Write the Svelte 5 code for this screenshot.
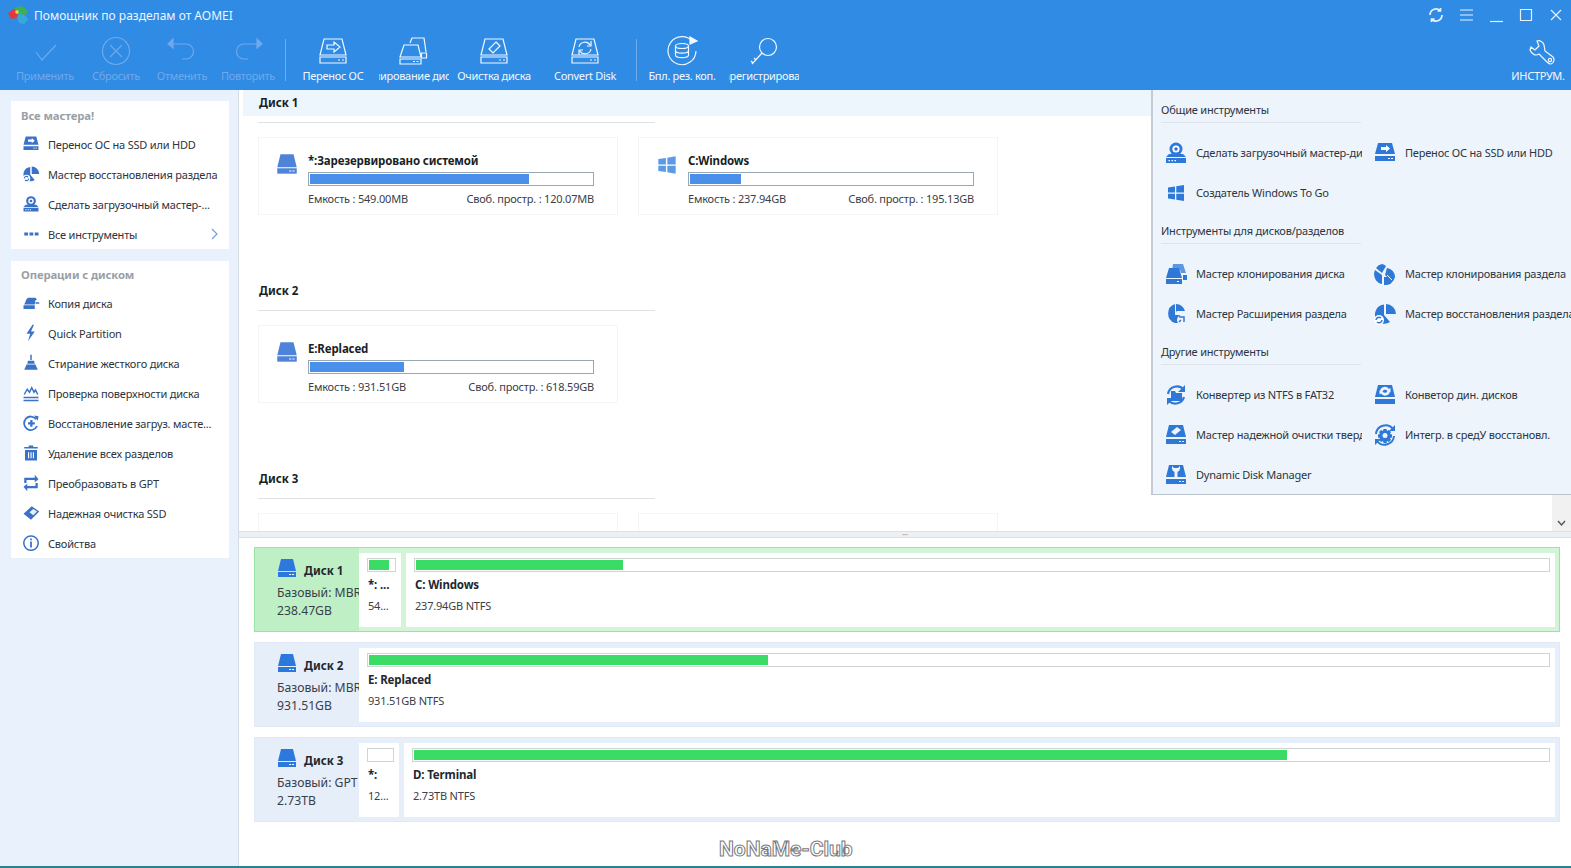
<script>
  const ic = {
    migrate: '<path d="M5 2h14l3 11H2z"/><path d="M2 15h20v5H2z"/><path fill="#fff" d="M8 6h5V4l4 3.500-4 3.500V9H8z"/><path fill="#fff" d="M15 17h2v1h-2zM18 17h2v1h-2z"/>',
    restore: '<path d="M13 2a10 10 0 0 1 10 10H13z"/><path d="M11 2.500V13l6 7a10 10 0 0 1-14-3 10 10 0 0 1 8-14.500z"/><circle cx="6" cy="18" r="5" fill="#fff"/><path fill="none" stroke="currentColor" stroke-width="1.500" d="M3 18a3 3 0 0 1 5-2M9 18a3 3 0 0 1-5 2"/>',
    boot: '<circle cx="12" cy="8" r="6.500"/><circle cx="12" cy="8" r="3.600" fill="#fff"/><circle cx="12" cy="8" r="1.800"/><path d="M5 13h14l3 3H2z"/><path d="M2 17h20v5H2z"/><path fill="#fff" d="M4.500 19h1.500v1.300H4.500zM7.500 19H9v1.300H7.500zM10.500 19H12v1.300h-1.500z"/>',
    dots: '<path d="M3 10h5v4H3zM10 10h5v4h-5zM17 10h5v4h-5z"/>',
    copy: '<path d="M8 5h10l2 3H18l-1 6H3l3-7z"/><path d="M2 15h15v5H2z"/><path d="M18 11h5v2h-5z"/>',
    bolt: '<path d="M14 1 6 13h5l-3 10 9-13h-5l4-9z"/>',
    broom: '<path d="M11 1h2v7h-2z"/><path d="M8 9h8l1 4H7z"/><path d="M6 14h12l3 7H3z"/>',
    surface: '<path d="M2 21h20v2H2zM2 17h20v2H2z"/><path fill="none" stroke="currentColor" stroke-width="2" d="M3 14 7 7l3 4 3-6 3 6 2-3 3 6"/>',
    recover: '<path fill="none" stroke="currentColor" stroke-width="2.400" d="M19 7a9 9 0 1 0 1 9"/><path d="M16 2l6 1-1 6z"/><path d="M11 8h3v3h3v3h-3v3h-3v-3H8v-3h3z"/>',
    trash: '<path d="M9 2h6v2h6v2H3V4h6z"/><path d="M4 8h16v14H4z"/><path fill="#fff" d="M8 11h1.500v8H8zM11.300 11h1.500v8h-1.500zM14.500 11H16v8h-1.500z"/>',
    convert: '<path d="M3 5h14V1l5 6-5 4V8H6v4H3zM21 19H7v4l-5-6 5-4v3h11v-4h3z"/>',
    eraser: '<path d="M13 3 23 10 12 21 2 13z"/><path fill="#fff" d="M15 6.500 20 10l-5 5-5-4z" opacity=".9"/>',
    info: '<path fill="none" stroke="currentColor" stroke-width="2" d="M12 2.500a9.500 9.500 0 1 0 .01 0z"/><path d="M10.800 6h2.400v2.400h-2.400zM10.800 10h2.400v8h-2.400z"/>',
    win: '<path d="M4 6.500 11 5.500V11.500H4zM12.300 5.300 20 4V11.500H12.300zM4 12.800h7V18.500L4 17.500zM12.300 12.800H20V20L12.300 18.700z"/>',
    disk: '<path d="M6 2h12l3 12H3z"/><path d="M3 15h18v5H3z"/><path fill="#fff" d="M14 17h2v1h-2zM17 17h2v1h-2z"/>',
    clone: '<path d="M9 2h10l3 9h-5l-1-3H8z" opacity=".75"/><path d="M5 6h10l3 10H2z"/><path d="M2 17h16v5H2z"/><path d="M19 13h4v5h-4z"/><path fill="#fff" d="M13 19h2v1h-2z"/>',
    pclone: '<path d="M9 2a9 9 0 0 1 4 2l-4 7L3 6a9 9 0 0 1 6-4z"/><path d="M2 8l7 5v9a10 10 0 0 1-7-14z"/><path d="M14 6a9 9 0 0 1 8 9h-8l-2-2z"/><path d="M11 15h11a10 10 0 0 1-11 8z"/><path fill="none" stroke="#edf4fc" d="M14 13l5 5"/>',
    extend: '<path d="M12 2a10 10 0 0 1 9 7H13a2 2 0 0 0-1 1z"/><path d="M11 2v11h7l3 3a10 10 0 0 1-10 5A10 10 0 0 1 11 2z"/><circle cx="18" cy="18" r="5" fill="#edf4fc"/><path fill="none" stroke="currentColor" stroke-width="1.500" d="M15 15h5v5M15 20l2-2"/>',
    fat: '<path fill="none" stroke="currentColor" stroke-width="2.200" d="M4 11A9 9 0 0 1 20 7M20 14A9 9 0 0 1 5 18"/><path d="M21 2v7h-7zM3 22v-7h7z"/><path d="M7 8h4l1 2h6v8H7z"/>',
    dyn: '<path d="M5 2h14l3 12H2z"/><path d="M2 16h20v5H2z"/><path fill="#edf4fc" d="M7 8a5 5 0 0 1 9-2l1.500-1v4h-4l1-1a3 3 0 0 0-5 0zM17 8.500a5 5 0 0 1-9 2L6.500 11.500v-4h4l-1 1a3 3 0 0 0 5 0z"/>',
    wipe: '<path d="M5 2h14l3 12H2z"/><path d="M2 16h20v5H2z"/><path fill="#edf4fc" d="M13 4l4 3-6 5-4-3z"/><path fill="#edf4fc" d="M15 18h2v1h-2zM18 18h2v1h-2z"/>',
    gear: '<path fill="none" stroke="currentColor" stroke-width="2" d="M3 11A9.500 9.500 0 0 1 20 6M21 13A9.500 9.500 0 0 1 4 18"/><path d="M22 2v6h-6zM2 22v-6h6z"/><path d="M10.500 6h3l.5 2 2-1 2 2-1 2 2 .500v3l-2 .500 1 2-2 2-2-1-.5 2h-3l-.5-2-2 1-2-2 1-2-2-.500v-3l2-.500-1-2 2-2 2 1z"/><circle cx="12" cy="12.500" r="2.500" fill="#edf4fc"/>',
    wrench: '<path d="M5 2h14l3 12H2z"/><path d="M2 16h20v5H2z"/><path fill="#edf4fc" d="M8 3v3a4 4 0 0 0 2.500 3V14h3V9A4 4 0 0 0 16 6V3l-2 2h-4z"/><path fill="#edf4fc" d="M15 18h2v1h-2zM18 18h2v1h-2z"/>'
  };

  const tb = {
    apply: '<path d="M9 16l6 8L29 9"/>',
    reset: '<circle cx="18" cy="15" r="13.500"/><path d="M12 9l12 12M24 9 12 21"/>',
    undo: '<path d="M6 8h16a7.500 7.500 0 0 1 0 15h-4"/><path d="M9 3 4 8l5 4z" fill="currentColor"/>',
    redo: '<path d="M30 8H14a7.500 7.500 0 0 0 0 15h4"/><path d="M27 3l5 5-5 4z" fill="currentColor"/>',
    move: '<path d="M9 3h18l4 16H5z"/><path d="M5 21h26v6H5z"/><path d="M23 24h2M27 24h2"/><path d="M12 9h7V6l6 5-6 5v-3h-7z"/>',
    clone: '<path d="M14 7 16 2h12l2 14"/><path d="M25.500 17h5v5h-5z"/><path d="M8 9h14l3 12H4z"/><path d="M4 23h21v5H4z"/><path d="M17 25.500h2M20.500 25.500h2"/>',
    wipe: '<path d="M9 3h18l4 16H5z"/><path d="M5 21h26v6H5z"/><path d="M23 24h2M27 24h2"/><path d="M20 6l4 4-7 7-4-4z"/>',
    conv: '<path d="M9 3h18l4 16H5z"/><path d="M5 21h26v6H5z"/><path d="M23 24h2M27 24h2"/><path d="M12 11a6 6 0 0 1 11-2M24 13a6 6 0 0 1-11 2M24 5v5h-4M12 19v-5h4"/>',
    backup: '<path d="M29 6A14 14 0 1 0 32 15"/><path d="M26 1l7 4-7 3z" fill="currentColor"/><ellipse cx="18" cy="10" rx="6.500" ry="2.500"/><path d="M11.500 10v9c0 3.500 13 3.500 13 0v-9M11.500 14.500c0 3.500 13 3.500 13 0"/>',
    key: '<circle cx="22" cy="11" r="8.500"/><path d="M16 17 6 28M10 24l-2-2M7 27l-2-2"/>',
    tools: '<path d="M17 5C20 4 23 6 24 9L25 15 33 21C35 23 34 27 31 28 29 28 28 27 27 26L19 18C16 20 12 19 10 14L11 11 15 14 19 10z"/><circle cx="30" cy="24" r="1.600"/>'
  };

  const tools = [
    { label: 'Применить', icon: 'apply', off: true, w: 'w70' },
    { label: 'Сбросить', icon: 'reset', off: true, w: 'w72' },
    { label: 'Отменить', icon: 'undo', off: true, w: 'w60' },
    { label: 'Повторить', icon: 'redo', off: true, w: 'w72' },
    { sep: true },
    { label: 'Перенос ОС', icon: 'move', w: 'w90' },
    { label: 'Клонирование диска', icon: 'clone', w: 'w72', shift: true },
    { label: 'Очистка диска', icon: 'wipe', w: 'w88' },
    { label: 'Convert Disk', icon: 'conv', w: 'w94' },
    { sep: true, wide: true },
    { label: 'Бпл. рез. коп.', icon: 'backup', w: 'w88' },
    { label: 'Зарегистрировать', icon: 'key', w: 'w76' }
  ];

  const wizards = [
    ['migrate', 'Перенос ОС на SSD или HDD'],
    ['restore', 'Мастер восстановления раздела'],
    ['boot', 'Сделать загрузочный мастер-...'],
    ['dots', 'Все инструменты']
  ];
  const ops = [
    ['copy', 'Копия диска'], ['bolt', 'Quick Partition'], ['broom', 'Стирание жесткого диска'],
    ['surface', 'Проверка поверхности диска'], ['recover', 'Восстановление загруз. масте...'],
    ['trash', 'Удаление всех разделов'], ['convert', 'Преобразовать в GPT'],
    ['eraser', 'Надежная очистка SSD'], ['info', 'Свойства']
  ];

  const sections = [
    { name: 'Диск 1', cards: [
      { icon: 'disk', title: '*:Зарезервировано системой', cap: '549.00MB', free: '120.07MB', pct: 77.500 },
      { icon: 'win', title: 'C:Windows', cap: '237.94GB', free: '195.13GB', pct: 18 }
    ] },
    { name: 'Диск 2', cards: [
      { icon: 'disk', title: 'E:Replaced', cap: '931.51GB', free: '618.59GB', pct: 33.500 }
    ] },
    { name: 'Диск 3', cards: [
      { icon: 'disk', title: '', cap: '', free: '', pct: 0 },
      { icon: 'disk', title: '', cap: '', free: '', pct: 0 }
    ] }
  ];

  const menu = [
    { name: 'Общие инструменты', items: [
      ['boot', 'Сделать загрузочный мастер-диск'], ['migrate', 'Перенос ОС на SSD или HDD'], ['win', 'Создатель Windows To Go']
    ] },
    { name: 'Инструменты для дисков/разделов', items: [
      ['clone', 'Мастер клонирования диска'], ['pclone', 'Мастер клонирования раздела'],
      ['extend', 'Мастер Расширения раздела'], ['restore', 'Мастер восстановления раздела']
    ] },
    { name: 'Другие инструменты', items: [
      ['fat', 'Конвертер из NTFS в FAT32'], ['dyn', 'Конветор дин. дисков'],
      ['wipe', 'Мастер надежной очистки твердого'], ['gear', 'Интегр. в средУ восстановл.'],
      ['wrench', 'Dynamic Disk Manager']
    ] }
  ];

  const disks = [
    { name: 'Диск 1', type: 'Базовый: MBR', size: '238.47GB', active: true, parts: [
      { t: '*: ...', d: '54...', w: 42, pct: 80 },
      { t: 'C: Windows', d: '237.94GB NTFS', grow: true, pct: 18.300 }
    ] },
    { name: 'Диск 2', type: 'Базовый: MBR', size: '931.51GB', parts: [
      { t: 'E: Replaced', d: '931.51GB NTFS', grow: true, pct: 33.800 }
    ] },
    { name: 'Диск 3', type: 'Базовый: GPT', size: '2.73TB', parts: [
      { t: '*:', d: '12...', w: 40, pct: 0 },
      { t: 'D: Terminal', d: '2.73TB NTFS', grow: true, pct: 77 }
    ] }
  ];
</script>

{#snippet icon(name, size)}
  <svg class="ico" width={size} height={size} viewBox="0 0 24 24" fill="currentColor">{@html ic[name]}</svg>
{/snippet}

<div class="app">
  <header class="head">
    <div class="titlebar">
      <svg class="logo" width="22" height="20" viewBox="0 0 22 20">
        <path fill="#e23a3a" d="M1 8l6-4 4 3-1 6-6 1z"/>
        <path fill="#3fae5a" d="M7 3l8-2 6 5-3 5-7-3z"/>
        <path fill="#38a7dc" d="M10 13l2-5 7 3 2 4-4 4-5-1z"/>
        <path fill="#f2d24a" d="M8 6l3-1 1 3-3 1z"/>
      </svg>
      <span class="apptitle">Помощник по разделам от AOMEI</span>
      <div class="winbtns">
        <svg class="refresh" width="16" height="16" viewBox="0 0 16 16"><path d="M2 8a6 6 0 0 1 10-4.500M14 8a6 6 0 0 1-10 4.500M12.500 1v3h-3M3.500 15v-3h3"/></svg>
        <svg width="16" height="16" viewBox="0 0 16 16"><path d="M2 3h13M2 8h13M2 13h13"/></svg>
        <svg width="16" height="16" viewBox="0 0 16 16"><path d="M2 14.500h13"/></svg>
        <svg width="16" height="16" viewBox="0 0 16 16"><path d="M2.500 2.500h11v11h-11z"/></svg>
        <svg width="16" height="16" viewBox="0 0 16 16"><path d="M3 3l10 10M13 3 3 13"/></svg>
      </div>
    </div>
    <div class="toolbar">
      {#each tools as t}
        {#if t.sep}
          <span class="tsep" class:wide={t.wide}></span>
        {:else}
          <div class="tool {t.w}" class:off={t.off}>
            <svg width="36" height="30" viewBox="0 0 36 30">{@html tb[t.icon]}</svg>
            <span class="tlabel"><span class:shift={t.shift}>{t.label}</span></span>
          </div>
        {/if}
      {/each}
      <div class="tool toolsbtn">
        <svg width="36" height="30" viewBox="0 0 36 30">{@html tb.tools}</svg>
        <span class="tlabel"><span>ИНСТРУМ.</span></span>
      </div>
    </div>
  </header>

  <div class="body">
    <aside class="side">
      <section class="panel">
        <h3>Все мастера!</h3>
        {#each wizards as [i, l], n}
          <div class="sitem">
            {@render icon(i, 18)}
            <span>{l}</span>
            {#if n === 3}
              <svg class="chev" width="8" height="12" viewBox="0 0 8 12"><path d="M1 1l5 5-5 5"/></svg>
            {/if}
          </div>
        {/each}
      </section>
      <section class="panel">
        <h3>Операции с диском</h3>
        {#each ops as [i, l]}
          <div class="sitem">
            {@render icon(i, 18)}
            <span>{l}</span>
          </div>
        {/each}
      </section>
    </aside>

    <main class="main">
      <div class="upper">
        {#each sections as s, si}
          <section class="dsec">
            <h2 class:band={si === 0}>{s.name}</h2>
            <div class="rule"></div>
            <div class="cards">
              {#each s.cards as c}
                <article class="card">
                  <span class="cicon" class:wincol={c.icon === 'win'}>{#if c.title}{@render icon(c.icon, 26)}{/if}</span>
                  {#if c.title}
                    <div class="cbody">
                      <div class="ctitle">{c.title}</div>
                      <div class="cbar"><i style="width:{c.pct}%"></i></div>
                      <div class="cinfo"><span>Емкость : {c.cap}</span><span>Своб. простр. : {c.free}</span></div>
                    </div>
                  {/if}
                </article>
              {/each}
            </div>
          </section>
        {/each}
        <div class="scroll">
          <svg width="9" height="7" viewBox="0 0 9 7"><path d="M1 1l3.500 4L8 1"/></svg>
        </div>
        <div class="menu">
          {#each menu as m}
            <section class="msec">
              <h4>{m.name}</h4>
              <div class="mgrid">
                {#each m.items as [i, l]}
                  <div class="mitem">
                    {@render icon(i, 24)}
                    <span>{l}</span>
                  </div>
                {/each}
              </div>
            </section>
          {/each}
        </div>
      </div>

      <div class="split"><span>•••</span></div>

      <div class="lower">
        {#each disks as d}
          <div class="row" class:active={d.active}>
            <div class="rinfo">
              <div class="rname">{@render icon('disk', 24)}<b>{d.name}</b></div>
              <div class="rtext">{d.type}</div>
              <div class="rtext">{d.size}</div>
            </div>
            <div class="parts">
              {#each d.parts as p}
                <div class="part" class:grow={p.grow} style={p.w ? `width:${p.w}px` : ''}>
                  <div class="pbar"><i style="width:{p.pct}%"></i></div>
                  <div class="ptitle">{p.t}</div>
                  <div class="pdet">{p.d}</div>
                </div>
              {/each}
            </div>
          </div>
        {/each}
        <div class="mark">NoNaMe-Club</div>
      </div>
    </main>
  </div>
</div>

<style>
  :global(body) { margin: 0; background: #fff; }
  :global(*) { box-sizing: border-box; }
  .app {
    width: 1571px; height: 868px; display: flex; flex-direction: column; overflow: hidden;
    font-family: "Noto Sans", "Open Sans", sans-serif; font-size: 11px; letter-spacing: -0.2px; color: #2c3440;
    border-bottom: 2px solid #2b8093;
  }
  .head { height: 90px; background: #2f8be4; color: #fff; flex: none; }
  .titlebar { height: 30px; display: flex; align-items: center; padding-left: 7px; }
  .logo { margin-right: 5px; }
  .apptitle { font-size: 12px; letter-spacing: 0; color: #eef6ff; }
  .winbtns { margin-left: auto; display: flex; gap: 14px; padding-right: 7px; }
  .winbtns svg { fill: none; stroke: #e8f2fd; stroke-width: 1.200; }
  .winbtns .refresh { stroke-width: 1.700; }
  .toolbar { height: 60px; display: flex; padding-left: 10px; }
  .tool { display: flex; flex-direction: column; align-items: center; padding-top: 6px; flex: none; color: #f2f8ff; }
  .tool svg { fill: none; stroke: currentColor; stroke-width: 1.200; }
  .tool.off { color: #6fa9ea; }
  .tlabel { width: 70px; margin-top: 2px; font-size: 11px; letter-spacing: -0.3px; line-height: 16px; display: flex; justify-content: center; overflow: hidden; white-space: nowrap; flex: none; }
  .tlabel span { flex: none; }
  .tlabel .shift { padding-right: 12px; }
  .w60 { width: 60px; } .w70 { width: 70px; } .w72 { width: 72px; } .w76 { width: 76px; }
  .w88 { width: 88px; } .w90 { width: 90px; } .w94 { width: 94px; }
  .w90 { margin-left: 1px; }
  .tsep { width: 1px; height: 42px; margin: 9px 1px 0 1px; background: #6facec; flex: none; }
  .tsep.wide { margin-left: 4px; }
  .w88 .tlabel, .w94 .tlabel { width: 88px; }
  .toolsbtn { margin-left: auto; width: 66px; }
  .body { flex: 1; display: grid; grid-template-columns: 239px 1fr; min-height: 0; }
  .side { background: #e9f2fc; border-right: 1px solid #d6dce4; padding: 11px 9px 0 11px; display: flex; flex-direction: column; gap: 12px; }
  .panel { background: #fff; }
  .panel h3 { margin: 0; height: 28px; line-height: 30px; padding-left: 10px; font-size: 11.300px; letter-spacing: -0.1px; font-weight: 700; color: #9a9fa6; }
  .panel:last-child h3 { height: 27px; line-height: 27px; }
  .sitem { height: 30px; display: flex; align-items: center; padding-left: 11px; gap: 8px; color: #2c3440; position: relative; white-space: nowrap; }
  .sitem .ico { color: #3a72c8; flex: none; }
  .chev { position: absolute; right: 10px; top: 9px; fill: none; stroke: #6f9ee0; stroke-width: 1.200; }
  .main { position: relative; min-width: 0; display: flex; flex-direction: column; }
  .upper { height: 441px; overflow: hidden; position: relative; flex: none; }
  .dsec { padding-left: 19px; height: 188px; }
  h2 { margin: 0 0 6px -15px; padding-left: 16px; height: 26px; line-height: 26px; font-size: 11.500px; letter-spacing: 0; font-weight: 700; color: #1a1f26; }
  h2.band { background: #eef6fd; }
  .rule { width: 397px; height: 1px; background: #dfe2e6; margin-bottom: 14px; }
  .cards { display: flex; gap: 20px; }
  .card { width: 360px; height: 78px; border: 1px solid #f3f4f6; display: flex; padding: 16px 23px 0 17px; background: #fff; }
  .cicon { width: 32px; flex: none; color: #4f83d8; margin: -2px 2px 0 -2px; }
  .wincol { color: #5b9be6; }
  .cbody { flex: 1; min-width: 0; }
  .ctitle { font-weight: 700; font-size: 11.500px; letter-spacing: -0.15px; line-height: 14px; color: #1a1f26; height: 18px; }
  .cbar { height: 14px; border: 1px solid #9ba6b3; padding: 1px; background: #fff; }
  .cbar i { display: block; height: 100%; background: #4a8fe9; }
  .cinfo { display: flex; justify-content: space-between; margin-top: 5px; line-height: 16px; color: #3a4048; }
  .scroll { position: absolute; right: 0; top: 405px; width: 19px; height: 36px; background: #f1f1f1; display: flex; align-items: flex-end; justify-content: center; padding-bottom: 4px; }
  .scroll svg { fill: none; stroke: #555; stroke-width: 1.400; }
  .menu { position: absolute; right: 0; top: 0; width: 420px; height: 405px; background: #edf4fc; border-left: 2px solid #c4cbd4; border-bottom: 1px solid #bcc4ce; padding: 8px 0 0 8px; }
  .msec { margin-bottom: 6px; }
  h4 { margin: 0 0 10px; height: 25px; line-height: 24px; font-size: 11px; font-weight: 400; width: 200px; border-bottom: 1px solid #dde4ec; color: #2c3440; white-space: nowrap; }
  .mgrid { display: grid; grid-template-columns: 209px 209px; grid-auto-rows: 40px; }
  .mitem { display: flex; align-items: center; padding-left: 3px; padding-bottom: 1px; gap: 8px; overflow: hidden; white-space: nowrap; }
  .mitem .ico { color: #2e78d8; flex: none; }
  .mitem span { width: 166px; flex: none; overflow: hidden; color: #2c3440; }
  .split { height: 7px; background: #eceff3; border-top: 1px solid #dde0e4; border-bottom: 1px solid #dde0e4; flex: none; display: flex; justify-content: center; align-items: center; font-size: 5px; color: #9aa0a8; letter-spacing: 0; overflow: hidden; }
  .lower { flex: 1; padding: 9px 11px 0 15px; display: flex; flex-direction: column; gap: 10px; position: relative; }
  .row { height: 85px; display: flex; flex: none; background: #e6eefa; border: 1px solid #e1e9f6; padding: 5px 4px 4px 0; }
  .row.active { background: #d2f5d7; border-color: #9be3a4; }
  .rinfo { width: 104px; flex: none; padding: 4px 0 0 22px; overflow: hidden; margin-top: -1px; white-space: nowrap; }
  .active .rinfo { background: #bff0c5; margin: -5px 0 -4px; padding-top: 8px; }
  .rname { display: flex; align-items: center; gap: 5px; height: 24px; margin-top: 1px; }
  .rname .ico { color: #2d78dc; flex: none; margin-left: -2px; }
  .rname b { font-size: 11.500px; letter-spacing: 0; color: #22282f; padding-top: 3px; }
  .rtext { font-size: 12.200px; letter-spacing: 0; line-height: 18px; color: #3a4048; }
  .rname + .rtext { margin-top: 3px; }
  .parts { flex: 1; display: flex; gap: 5px; min-width: 0; }
  .part { background: #fff; padding: 5px 5px 0 8px; flex: none; overflow: hidden; white-space: nowrap; }
  .part.grow { flex: 1; }
  .pbar { height: 14px; border: 1px solid #cfd6d2; padding: 1px; background: #fff; }
  .pbar i { display: block; height: 100%; background: #3bdc66; }
  .ptitle { font-weight: 700; font-size: 11.500px; letter-spacing: -0.15px; line-height: 16px; margin-top: 5px; color: #22282f; padding-left: 1px; }
  .pdet { line-height: 16px; margin-top: 5px; color: #3a4048; padding-left: 1px; }
  .mark {
    position: absolute; left: 480px; top: 299px; font-family: Roboto, sans-serif; font-size: 21px; font-weight: 700;
    color: #fff; -webkit-text-stroke: 1px #77797c; letter-spacing: 0; white-space: nowrap;
  }
</style>
